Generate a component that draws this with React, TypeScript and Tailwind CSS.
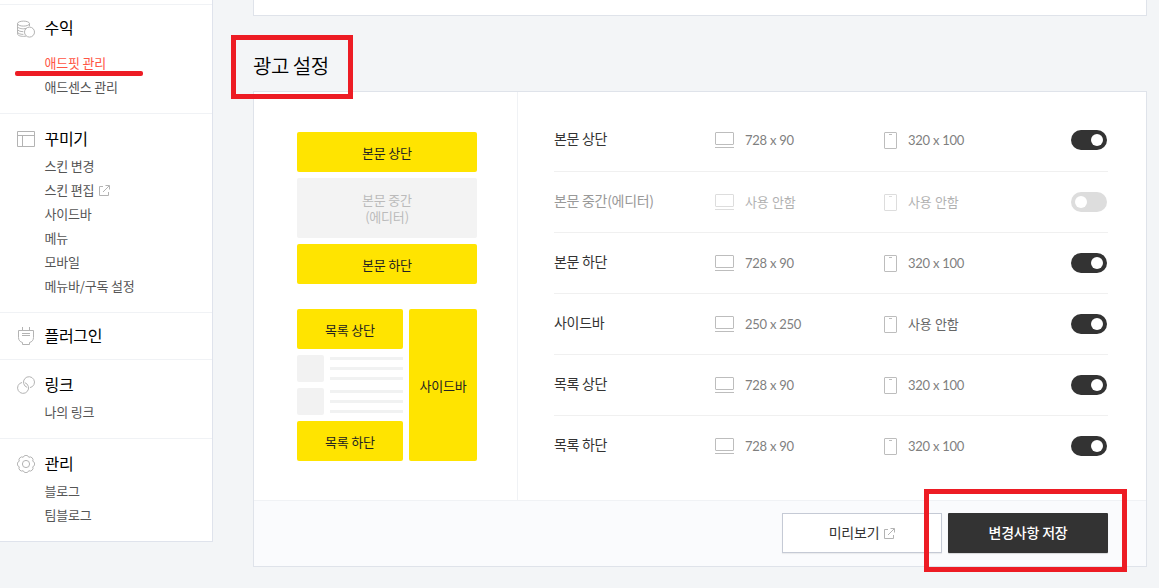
import type { ReactNode } from 'react';

type MenuItem = { label: string; active?: boolean; external?: boolean };

function ExternalIcon({ className = '' }: { className?: string }) {
  return (
    <svg className={className} width="11" height="11" viewBox="0 0 11 11" fill="none" stroke="#b3b3b3" strokeWidth="1">
      <path d="M4 1.5H.5v9h9V7" />
      <path d="M6.5.5h4v4M10.2.8 4 7" />
    </svg>
  );
}

function CoinsIcon() {
  return (
    <svg className="overflow-visible" width="18" height="18" viewBox="0 0 18 18" fill="none" stroke="#b3b3b3">
      <g transform="translate(0 1.6)">
        <ellipse cx="6.5" cy="3" rx="6" ry="2.5" />
        <path d="M.5 3v2.8c0 1.300 2.700 2.400 6 2.400 1 0 1.900-.1 2.700-.3M12.500 3v2.600M.5 5.800v2.900c0 1.300 2.600 2.300 5.800 2.400M.5 8.700v2.800c0 1.200 2.600 2.300 5.900 2.300M.5 11.500v1.800c0 1.400 2.700 2.500 6 2.500.9 0 1.700-.1 2.500-.3" />
        <circle cx="12.500" cy="11.500" r="5" />
      </g>
    </svg>
  );
}

function LayoutIcon() {
  return (
    <svg width="18" height="18" viewBox="0 0 18 18" fill="none" stroke="#b3b3b3">
      <path d="M.5 1.500h17v15H.5zM.5 5.500h17M5.500 5.500v11" />
    </svg>
  );
}

function PlugIcon() {
  return (
    <svg width="18" height="18" viewBox="0 0 18 18" fill="none" stroke="#b3b3b3">
      <path d="M1.500 3.500h15v7c0 2.700-1.700 4.500-4 5v2h-7v-2c-2.300-.5-4-2.300-4-5zM5.500 0v3.500M12.500 0v3.500M5 6.500h8M5 8.500h8" />
    </svg>
  );
}

function LinkIcon() {
  return (
    <svg width="18" height="18" viewBox="0 0 18 18" fill="none" stroke="#b3b3b3">
      <path d="M7.900 6.700A5.500 5.500 0 1 1 5.050 6.480" />
      <path d="M10.100 11.370A5.500 5.500 0 1 1 12.950 11.620" />
    </svg>
  );
}

function GearIcon() {
  return (
    <svg width="18" height="18" viewBox="0 0 18 18" fill="none" stroke="#b3b3b3" strokeLinejoin="round">
      <path d="M6.210 2.260A2.960 2.960 0 0 1 11.790 2.260A2.960 2.960 0 0 1 15.740 6.210A2.960 2.960 0 0 1 15.740 11.790A2.960 2.960 0 0 1 11.790 15.740A2.960 2.960 0 0 1 6.210 15.740A2.960 2.960 0 0 1 2.260 11.790A2.960 2.960 0 0 1 2.260 6.210A2.960 2.960 0 0 1 6.210 2.260Z" />
      <circle cx="9" cy="9" r="3.600" />
    </svg>
  );
}

function MenuSection({
  icon,
  title,
  items = [],
  className,
  listClass = '',
}: {
  icon: ReactNode;
  title: string;
  items?: MenuItem[];
  className: string;
  listClass?: string;
}) {
  return (
    <section className={`border-t border-[#f0f2f5] pl-[17px] ${className}`}>
      <h2 className="flex h-6 items-center gap-[9.5px] text-[16px] leading-6 text-black">
        {icon}
        <span className="pb-[2px] tracking-[-0.3px]">{title}</span>
      </h2>
      {items.length > 0 && (
        <ul className={`pl-[27.5px] ${listClass}`}>
          {items.map((item) => (
            <li
              key={item.label}
              className={`flex h-6 items-center text-[13px] leading-6 tracking-[-0.2px] ${item.active ? 'text-[#ff5544]' : 'text-[#555]'}`}
            >
              <span className="pb-px">{item.label}</span>
              {item.external && <ExternalIcon className="ml-[4.5px]" />}
            </li>
          ))}
        </ul>
      )}
    </section>
  );
}

function Sidebar() {
  return (
    <aside className="h-[542px] w-[213px] shrink-0 border-r border-b border-[#dfe3ec] bg-white pt-1">
      <MenuSection
        icon={<CoinsIcon />}
        title="수익"
        className="pt-[11px] pb-[14px]"
        listClass="mt-[11px]"
        items={[{ label: '애드핏 관리', active: true }, { label: '애드센스 관리' }]}
      />
      <MenuSection
        icon={<LayoutIcon />}
        title="꾸미기"
        className="pt-[13px] pb-[14px]"
        listClass="mt-[3px]"
        items={[
          { label: '스킨 변경' },
          { label: '스킨 편집', external: true },
          { label: '사이드바' },
          { label: '메뉴' },
          { label: '모바일' },
          { label: '메뉴바/구독 설정' },
        ]}
      />
      <MenuSection icon={<PlugIcon />} title="플러그인" className="py-[11px]" />
      <MenuSection
        icon={<LinkIcon />}
        title="링크"
        className="pt-[13px] pb-[14px]"
        listClass="mt-[3px]"
        items={[{ label: '나의 링크' }]}
      />
      <MenuSection
        icon={<GearIcon />}
        title="관리"
        className="pt-[13px] pb-[14px]"
        listClass="mt-[3px]"
        items={[{ label: '블로그' }, { label: '팀블로그' }]}
      />
    </aside>
  );
}

function Slot({ children, className }: { children: ReactNode; className: string }) {
  return (
    <div className={`flex items-center justify-center rounded-[2px] text-center text-[13px] leading-[17px] tracking-[-0.2px] ${className}`}>
      <span>{children}</span>
    </div>
  );
}

function PostLines() {
  return (
    <div className="flex h-[27px] gap-[6px]">
      <div className="w-[27px] rounded-[2px] bg-[#f2f2f2]" />
      <div className="flex flex-1 flex-col gap-[7px] pt-[2px]">
        <div className="h-[3px] bg-[#f1f2f2]" />
        <div className="h-[3px] bg-[#f1f2f2]" />
        <div className="h-[3px] bg-[#f1f2f2]" />
      </div>
    </div>
  );
}

function Preview() {
  return (
    <div className="w-[264px] shrink-0 border-r border-[#f0f2f5] pt-10 pl-[43px]">
      <div className="flex w-[180px] flex-col gap-[6px]">
        <Slot className="h-10 bg-[#ffe400] text-[#222]">본문 상단</Slot>
        <Slot className="h-[60px] bg-[#f3f3f3] text-[#bbb]">
          본문 중간
          <br />
          (에디터)
        </Slot>
        <Slot className="h-10 bg-[#ffe400] text-[#222]">본문 하단</Slot>
      </div>
      <div className="mt-[25px] flex w-[180px] gap-[6px]">
        <div className="flex w-[106px] flex-col gap-[6px]">
          <Slot className="h-10 bg-[#ffe400] text-[#222]">목록 상단</Slot>
          <PostLines />
          <PostLines />
          <Slot className="h-10 bg-[#ffe400] text-[#222]">목록 하단</Slot>
        </div>
        <Slot className="flex-1 bg-[#ffe400] text-[#222]">사이드바</Slot>
      </div>
    </div>
  );
}

function DesktopIcon() {
  return (
    <svg width="19" height="16" viewBox="0 0 19 16" fill="none" stroke="#bdbdbd">
      <rect x=".5" y=".5" width="18" height="12" rx=".5" />
      <path d="M0 15.500h19" />
    </svg>
  );
}

function PhoneIcon() {
  return (
    <svg width="13" height="17" viewBox="0 0 13 17" fill="none" stroke="#bdbdbd">
      <rect x=".5" y=".5" width="12" height="16" rx=".5" />
      <path d="M5 2.500h3" />
    </svg>
  );
}

function Toggle({ on }: { on: boolean }) {
  return (
    <span className={`ml-auto flex h-5 w-9 items-center rounded-full px-1 ${on ? 'justify-end bg-[#333]' : 'bg-[#ddd]'}`}>
      <span className="size-3 rounded-full bg-white" />
    </span>
  );
}

const ROWS = [
  { name: '본문 상단', pc: '728 x 90', mobile: '320 x 100', on: true },
  { name: '본문 중간(에디터)', pc: '사용 안함', mobile: '사용 안함', on: false },
  { name: '본문 하단', pc: '728 x 90', mobile: '320 x 100', on: true },
  { name: '사이드바', pc: '250 x 250', mobile: '사용 안함', on: true },
  { name: '목록 상단', pc: '728 x 90', mobile: '320 x 100', on: true },
  { name: '목록 하단', pc: '728 x 90', mobile: '320 x 100', on: true },
];

function SizeText({ children }: { children: string }) {
  const unused = children === '사용 안함';
  return (
    <span
      className={`font-[Lato,'Noto_Sans_CJK_KR',sans-serif] text-[13px] leading-5 ${unused ? 'tracking-[-0.1px] text-[#666]' : 'tracking-[-0.25px] text-[#7f7f7f]'}`}
    >
      {children}
    </span>
  );
}

function SettingsRows() {
  return (
    <div className="flex-1 pt-[18px] pr-[38px] pl-9">
      {ROWS.map((row, i) => (
        <div
          key={row.name}
          className={`flex items-center border-[#f0f0f0] pr-px ${i === 0 ? 'h-[62px] border-b pb-px' : i === 5 ? 'h-[60px]' : 'h-[61px] border-b'}`}
        >
          <span className={`w-[161px] pb-[4px] text-[14px] leading-5 tracking-[-0.3px] ${row.on ? 'text-[#333]' : 'text-[#999]'}`}>
            {row.name}
          </span>
          <span className={`flex w-[169px] items-center gap-[11px] ${row.on ? '' : 'opacity-50'}`}>
            <DesktopIcon />
            <SizeText>{row.pc}</SizeText>
          </span>
          <span className={`flex items-center gap-[11px] ${row.on ? '' : 'opacity-50'}`}>
            <PhoneIcon />
            <SizeText>{row.mobile}</SizeText>
          </span>
          <Toggle on={row.on} />
        </div>
      ))}
    </div>
  );
}

export default function App() {
  return (
    <div className="relative flex h-[588px] w-[1159px] overflow-hidden bg-[#f3f5f7] font-['Noto_Sans_CJK_KR',sans-serif]">
      <Sidebar />
      <main className="ml-10 w-[894px]">
        <div className="h-4 border-x border-b border-[#dfe3ea] bg-white" />
        <h1 className="flex h-[75px] items-center pt-[25px] text-[20px] leading-[30px] font-[350] tracking-[-0.5px] text-black">
          광고 설정
        </h1>
        <section className="h-[476px] border border-[#dfe3ea] bg-white">
          <div className="flex h-[408px]">
            <Preview />
            <SettingsRows />
          </div>
          <footer className="flex h-[66px] justify-end gap-[6px] border-t border-[#f0f2f5] bg-[#fafbfd] pt-3 pr-[38px] text-[14px] tracking-[-0.2px]">
            <button className="flex h-10 w-40 items-center justify-center gap-[5px] border border-[#c5cad5] bg-white text-[#333] shadow-[0_1px_1px_rgba(0,0,0,0.06)]">
              <span className="pb-px">미리보기</span>
              <ExternalIcon />
            </button>
            <button className="h-10 w-40 rounded-[1px] bg-[#333] pb-px font-medium text-white shadow-[0_1px_1px_rgba(0,0,0,0.15)]">
              변경사항 저장
            </button>
          </footer>
        </section>
      </main>

      {/* Red annotation marks laid over the page */}
      <div className="absolute top-[71px] left-[15px] h-[5px] w-32 rounded-[2px] bg-[#ed1c24]" />
      <div className="absolute top-[35px] left-[231px] h-16 w-[122px] border-[5px] border-[#ed1c24]" />
      <div className="absolute top-[489px] left-[924px] h-[83px] w-[203px] border-[5px] border-[#ed1c24]" />
    </div>
  );
}
